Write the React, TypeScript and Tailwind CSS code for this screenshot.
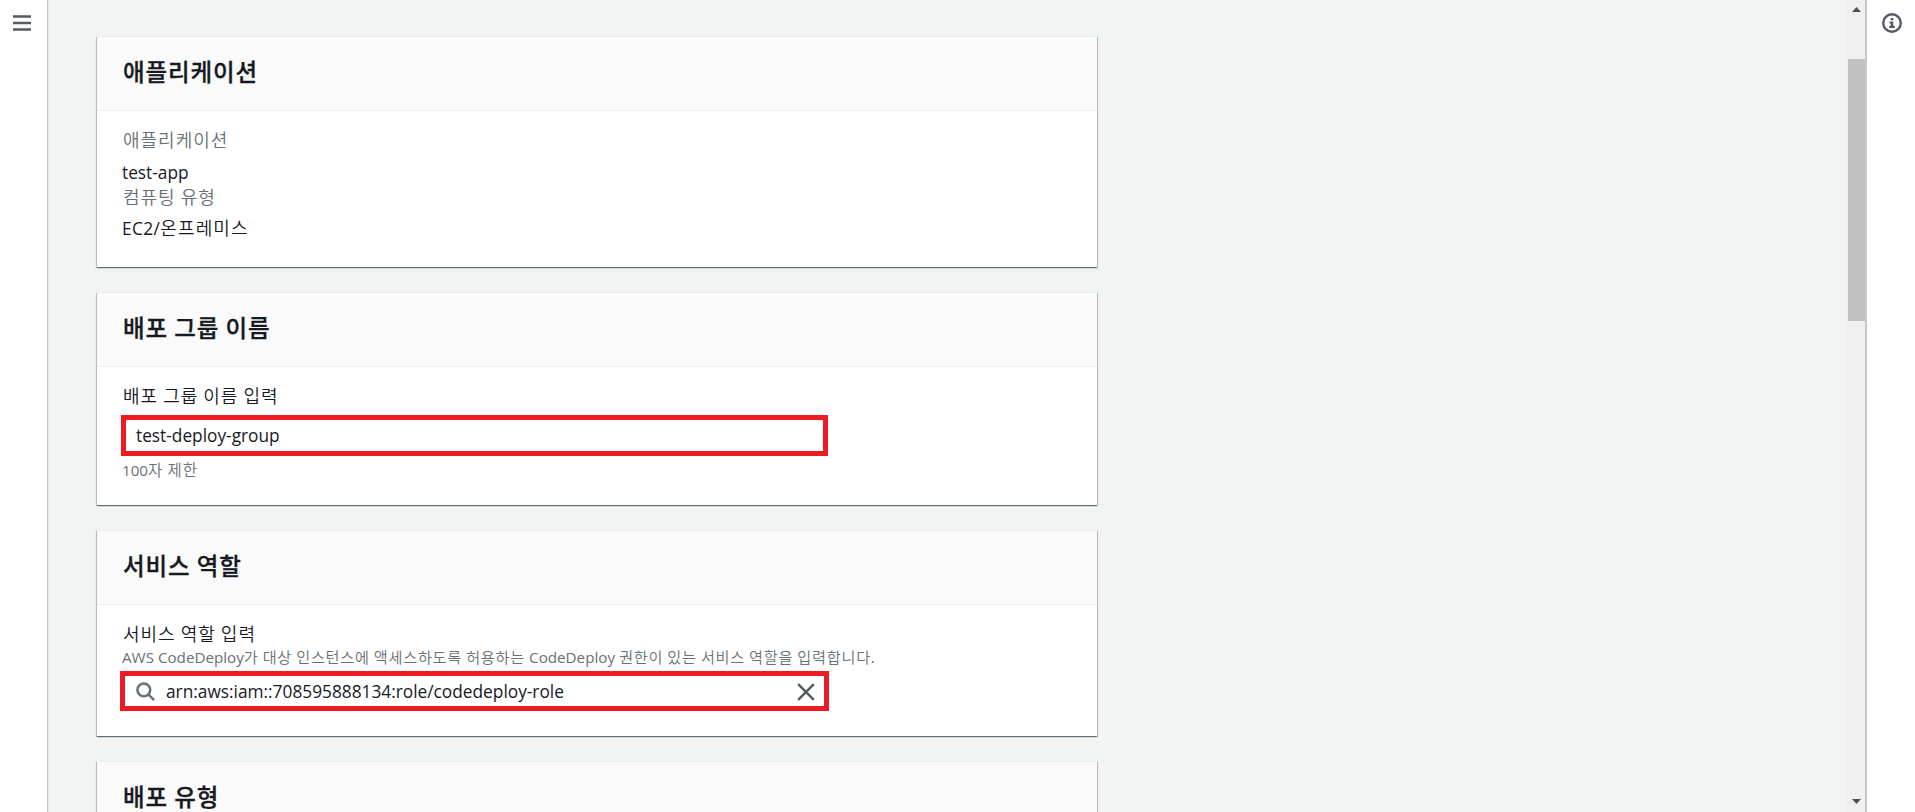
import type { ReactNode } from 'react';

const latin = "font-['Open_Sans','Noto_Sans',sans-serif]";

function Ko({ children, className = '' }: { children: ReactNode; className?: string }) {
  return <span className={`font-['Noto_Sans_CJK_KR',sans-serif] font-[350] ${className}`}>{children}</span>;
}

function Card({ title, className, children }: { title: string; className: string; children?: ReactNode }) {
  return (
    <section
      className={`flex w-[1000px] shrink-0 flex-col border-t border-[#eaeded] bg-white shadow-[0_1px_1px_0_rgba(0,28,36,0.4),1px_1px_1px_0_rgba(0,28,36,0.2),-1px_1px_1px_0_rgba(0,28,36,0.2)] ${className}`}
    >
      <header className="flex h-[74px] shrink-0 items-center border-b border-[#eaeded] bg-[#fafafa] pb-[6px] pl-[26px]">
        <h2 className="font-['Noto_Sans_CJK_KR',sans-serif] text-[23.5px] leading-[30px] font-medium tracking-[0.9px] whitespace-nowrap text-[#16191f] [-webkit-text-stroke:0.3px_#16191f]">
          {title}
        </h2>
      </header>
      <div className="flex flex-col items-start pl-[25px] whitespace-nowrap">{children}</div>
    </section>
  );
}

export default function App() {
  return (
    <div className={`flex h-[812px] w-full overflow-hidden bg-[#f2f4f4] text-[17.3px] text-[#16191f] ${latin}`}>
      <aside className="flex w-[48px] shrink-0 flex-col border-r border-[#c5c9cb] bg-white pt-[15px] pl-[13px] shadow-[1px_0_1px_#e3e6e6]">
        <svg width="18" height="16" viewBox="0 0 18 16" stroke="#545b64" strokeWidth="2.4">
          <path d="M0 1.5h18M0 8h18M0 14.5h18" />
        </svg>
      </aside>

      <main className="flex min-w-0 flex-1 flex-col gap-[25px] overflow-hidden pt-[36px] pl-[49px]">
        <Card title="애플리케이션" className="h-[231px]">
          <div className="mt-[16px] h-6 pl-px leading-6 text-[#687078]"><Ko className="text-[18px] tracking-[1px]">애플리케이션</Ko></div>
          <div className="mt-[10px] h-6 leading-6">test-app</div>
          <div className="-mt-px h-6 pl-px leading-6 text-[#687078]"><Ko className="text-[18px] tracking-[1px]">컴퓨팅 유형</Ko></div>
          <div className="mt-[7px] h-6 leading-6"><span className="tracking-[0.4px]">EC2/</span><Ko className="text-[18px] tracking-[1.1px]">온프레미스</Ko></div>
        </Card>

        <Card title="배포 그룹 이름" className="h-[213px]">
          <div className="mt-[16px] h-6 pl-px leading-6"><Ko className="text-[18px] tracking-[1px]">배포 그룹 이름 입력</Ko></div>
          <div className="mt-[8px] -ml-px flex h-[41px] w-[707px] items-center border-5 border-[#ef1b22] bg-white pl-[10px]">
            test-deploy-group
          </div>
          <div className="mt-[3px] h-5 text-[15.2px] leading-5 text-[#687078]">100<Ko className="text-[15.5px] tracking-[0.9px]">자 제한</Ko></div>
        </Card>

        <Card title="서비스 역할" className="h-[206px]">
          <div className="mt-[16px] h-6 pl-px leading-6"><Ko className="text-[18px] tracking-[1px]">서비스 역할 입력</Ko></div>
          <div className="mt-px h-5 text-[15.2px] leading-5 text-[#687078]">
            AWS CodeDeploy<Ko className="text-[15.2px] tracking-[0.73px]">가 대상 인스턴스에 액세스하도록 허용하는 </Ko>CodeDeploy<Ko className="text-[15.2px] tracking-[0.73px]"> 권한이 있는 서비스 역할을 입력합니다.</Ko>
          </div>
          <div className="mt-[5px] -ml-[2px] flex h-[40px] w-[709px] items-center border-5 border-[#ef1b22] bg-white pt-px pr-[9px] pl-[11px]">
            <svg width="19" height="19" viewBox="0 0 19 19" fill="none" stroke="#687078" strokeWidth="2.5">
              <circle cx="7.8" cy="7.8" r="6.4" />
              <path d="M12.3 12.3l5.8 5.8" />
            </svg>
            <span className="ml-[11px] flex-1">arn:aws:iam::708595888134:role/codedeploy-role</span>
            <svg width="18" height="18" viewBox="0 0 18 18" stroke="#545b64" strokeWidth="2.5">
              <path d="M1.2 1.2l15.6 15.6M16.8 1.2L1.2 16.8" />
            </svg>
          </div>
        </Card>

        <Card title="배포 유형" className="h-[220px]" />
      </main>

      <div className="flex w-[19px] shrink-0 flex-col items-center justify-between bg-[#f0f0f0] pt-[7px] pb-[8px]">
        <svg width="9" height="5" viewBox="0 0 9 5" fill="#505050" className="ml-[2px] shrink-0">
          <path d="M4.5 0L9 5H0z" />
        </svg>
        <div className="mt-[47px] ml-[2px] h-[262px] w-[17px] shrink-0 bg-[#c1c1c1]" />
        <div className="flex-1" />
        <svg width="9" height="5" viewBox="0 0 9 5" fill="#505050" className="ml-[2px] shrink-0">
          <path d="M0 0h9L4.500 5z" />
        </svg>
      </div>

      <aside className="flex w-[50px] shrink-0 flex-col border-l-2 border-[#c5c9cb] bg-white pt-[13px] pl-[15px]">
        <svg width="20" height="20" viewBox="0 0 20 20">
          <circle cx="10" cy="10" r="8.8" fill="none" stroke="#545b64" strokeWidth="2.4" />
          <path d="M8.700 5h2.600v2.200H8.700zM7.500 8.500h3.800v4.300h1.500v2.200H7.200v-2.200h1.500v-2.200H7.500z" fill="#545b64" />
        </svg>
      </aside>
    </div>
  );
}
